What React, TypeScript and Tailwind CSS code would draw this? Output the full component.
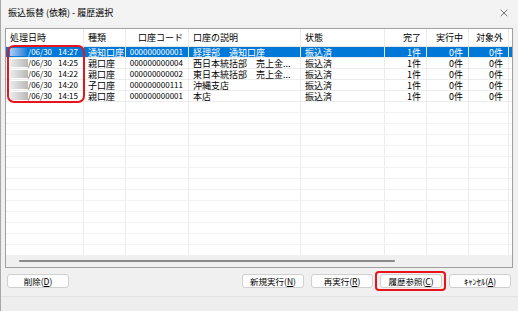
import { X } from 'lucide-react'

const widths = ['w-[78px]', 'w-[42px]', 'w-[63px]', 'w-[112px]', 'w-[84px]', 'w-[42px]', 'w-[42px]', 'w-[40px]']
const headers = ['処理日時', '種類', '口座コード', '口座の説明', '状態', '完了', '実行中', '対象外']
const rightCols = [2, 5, 6, 7]

const rows = [
  { date: '/06/30', time: '14:27', kind: '通知口座', code: '000000000001', desc: '経理部　通知口座' },
  { date: '/06/30', time: '14:25', kind: '親口座', code: '000000000004', desc: '西日本統括部　売上金...' },
  { date: '/06/30', time: '14:22', kind: '親口座', code: '000000000002', desc: '東日本統括部　売上金...' },
  { date: '/06/30', time: '14:20', kind: '子口座', code: '000000000111', desc: '沖縄支店' },
  { date: '/06/30', time: '14:15', kind: '親口座', code: '000000000001', desc: '本店' },
]

function Cell({ i, children }: { i: number; children?: React.ReactNode }) {
  const right = rightCols.includes(i)
  return (
    <div
      className={`${widths[i]} flex-shrink-0 h-full border-r border-[#ececec] flex items-center overflow-hidden whitespace-nowrap
        ${right ? 'justify-end pr-[5px]' : 'pl-[4px]'}`}
    >
      {children}
    </div>
  )
}

function Button({ label, k }: { label: string; k: string }) {
  return (
    <button className="w-[62px] h-[14px] rounded-[3px] border border-[#d0d0d0] bg-[#fdfdfd] text-[8.5px] leading-none text-black flex items-center justify-center">
      {label}(<span className="underline">{k}</span>)
    </button>
  )
}

export default function App() {
  return (
    <div className="relative w-[518px] h-[311px] overflow-hidden bg-[#f0f0f0] border-l border-[#a8a8a8] text-black font-['Noto_Sans_CJK_JP',sans-serif] flex flex-col">
      <div className="h-[25px] flex items-center justify-between pl-[7px] pr-[8px] bg-[#f3f3f3] flex-shrink-0">
        <span className="text-[9px]">振込振替 (依頼) - 履歴選択</span>
        <X size={12} strokeWidth={1.2} className="text-[#222]" />
      </div>

      <div className="mt-[3px] ml-[4px] w-[508px] h-[240px] border border-[#a0a0a0] bg-white flex flex-col overflow-hidden">
        <div className="h-[18px] flex border-b border-[#e5e5e5] text-[9px] flex-shrink-0">
          {headers.map((h, i) => (
            <Cell key={h} i={i}>{h}</Cell>
          ))}
        </div>
        <div className="flex-1 overflow-hidden text-[9px] leading-none">
          {rows.map((r, idx) => {
            const sel = idx === 0
            return (
              <div
                key={idx}
                className={`h-[11px] flex border-b border-[#ececec] ${sel ? 'bg-[#0078d7] text-white' : ''}`}
              >
                <div className="w-[78px] flex-shrink-0 h-full border-r border-[#ececec] flex items-center pl-[4px] pr-[5px] whitespace-nowrap text-[8px]">
                  <span
                    className={`w-[18px] h-[8px] flex-shrink-0 bg-linear-to-r ${sel ? 'from-[#a9cdf2] to-[#0078d7]' : 'from-[#ececec] to-[#b9b9b9]'}`}
                  />
                  <span>{r.date}</span>
                  <span className="ml-auto">{r.time}</span>
                </div>
                <Cell i={1}>{r.kind}</Cell>
                <Cell i={2}><span className="text-[8px]">{r.code}</span></Cell>
                <Cell i={3}>{r.desc}</Cell>
                <Cell i={4}>振込済</Cell>
                <Cell i={5}>1件</Cell>
                <Cell i={6}>0件</Cell>
                <Cell i={7}>0件</Cell>
              </div>
            )
          })}
          {Array.from({ length: 14 }).map((_, idx) => (
            <div key={idx} className="h-[11px] flex border-b border-[#f2f2f2]">
              {widths.map((_, i) => (
                <Cell key={i} i={i} />
              ))}
            </div>
          ))}
        </div>
        <div className="h-[12px] bg-[#f0f0f0] flex items-center pl-[13px] flex-shrink-0">
          <div className="w-[376px] h-[2px] rounded-full bg-[#8a8a8a]" />
        </div>
      </div>

      <div className="mt-[6px] px-[6px] flex items-center">
        <Button label="削除" k="D" />
        <div className="ml-auto flex gap-[7px] mr-[1px]">
          <Button label="新規実行" k="N" />
          <Button label="再実行" k="R" />
          <Button label="履歴参照" k="C" />
          <Button label="ｷｬﾝｾﾙ" k="A" />
        </div>
      </div>

      <div className="mt-auto h-[15px] border-t border-[#e2e2e2] bg-[#eeeeee]" />

      <div className="absolute left-[6px] top-[45px] w-[78px] h-[58px] border-[2.5px] border-[#e8141b] rounded-[7px]" />
      <div className="absolute left-[374px] top-[271px] w-[71px] h-[20px] border-[2.5px] border-[#e8141b] rounded-[4px]" />
    </div>
  )
}
